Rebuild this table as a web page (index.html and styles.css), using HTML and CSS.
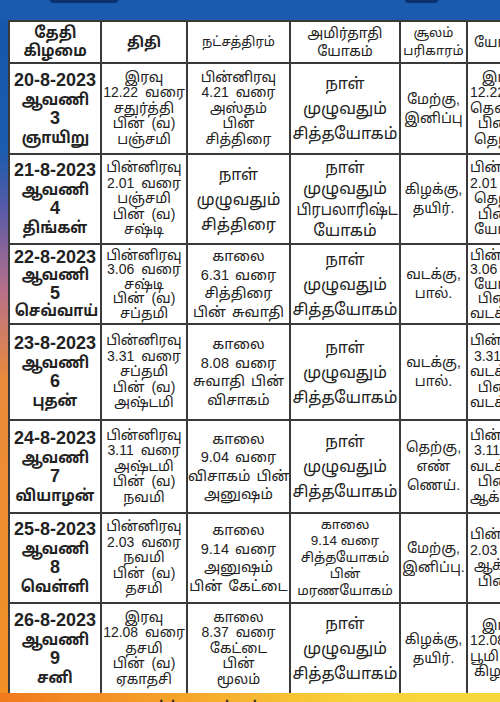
FILE: index.html
```html
<!DOCTYPE html>
<html lang="ta">
<head>
<meta charset="utf-8">
<link rel="stylesheet" href="styles.css">
</head>
<body>
<div class="page">
  <div class="topband">
    <span class="tab tab-a"></span>
    <span class="tab tab-b"></span>
  </div>
  <div class="main">
    <table class="cal">
      <colgroup>
        <col class="w1"><col class="w2"><col class="w3"><col class="w4"><col class="w5"><col class="w6">
      </colgroup>
      <thead>
        <tr class="head">
          <th class="b"><span class="tw">தேதி</span><br><span class="tw">கிழமை</span></th>
          <th class="b">திதி</th>
          <th class="nk">நட்சத்திரம்</th>
          <th>அமிர்தாதி<br>யோகம்</th>
          <th class="sm">சூலம்<br>பரிகாரம்</th>
          <th class="lh">யோகம்</th>
        </tr>
      </thead>
      <tbody>
        <tr class="r1">
          <td class="date">20-8-2023<br><span class="tw">ஆவணி</span><br>3<br><span class="tw">ஞாயிறு</span></td>
          <td class="tx">இரவு<br>12.22 வரை<br>சதுர்த்தி<br>பின் (வ)<br>பஞ்சமி</td>
          <td class="tx">பின்னிரவு<br>4.21 வரை<br>அஸ்தம்<br>பின்<br>சித்திரை</td>
          <td class="big">நாள்<br>முழுவதும்<br>சித்தயோகம்</td>
          <td class="dir">மேற்கு,<br>இனிப்பு</td>
          <td class="tx l">&nbsp;&nbsp;&nbsp;இரவு<br>12.22 வரை<br>தென்மேற்கு<br>&nbsp;&nbsp;பின்<br>&nbsp;தெற்கு</td>
        </tr>
        <tr class="r2">
          <td class="date">21-8-2023<br><span class="tw">ஆவணி</span><br>4<br><span class="tw">திங்கள்</span></td>
          <td class="tx">பின்னிரவு<br>2.01 வரை<br>பஞ்சமி<br>பின் (வ)<br>சஷ்டி</td>
          <td class="big">நாள்<br>முழுவதும்<br>சித்திரை</td>
          <td class="big four">நாள்<br>முழுவதும்<br><span class="sq">பிரபலாரிஷ்ட</span><br>யோகம்</td>
          <td class="dir">கிழக்கு,<br>தயிர்.</td>
          <td class="tx l">பின்னிரவு<br>2.01 வரை<br>&nbsp;தெற்கு<br>&nbsp;&nbsp;பின்<br>&nbsp;யோகம்</td>
        </tr>
        <tr class="r3">
          <td class="date">22-8-2023<br><span class="tw">ஆவணி</span><br>5<br><span class="tw">செவ்வாய்</span></td>
          <td class="tx">பின்னிரவு<br>3.06 வரை<br>சஷ்டி<br>பின் (வ)<br>சப்தமி</td>
          <td class="mid">காலை<br>6.31 வரை<br>சித்திரை<br>பின் சுவாதி</td>
          <td class="big">நாள்<br>முழுவதும்<br>சித்தயோகம்</td>
          <td class="dir">வடக்கு,<br>பால்.</td>
          <td class="tx l">பின்னிரவு<br>3.06 வரை<br>&nbsp;யோகம்<br>&nbsp;&nbsp;பின்<br>வடக்கு</td>
        </tr>
        <tr class="r4">
          <td class="date">23-8-2023<br><span class="tw">ஆவணி</span><br>6<br><span class="tw">புதன்</span></td>
          <td class="tx">பின்னிரவு<br>3.31 வரை<br>சப்தமி<br>பின் (வ)<br>அஷ்டமி</td>
          <td class="mid">காலை<br>8.08 வரை<br>சுவாதி பின்<br>விசாகம்</td>
          <td class="big">நாள்<br>முழுவதும்<br>சித்தயோகம்</td>
          <td class="dir">வடக்கு,<br>பால்.</td>
          <td class="tx l">பின்னிரவு<br>&nbsp;3.31 வரை<br>வடக்கு<br>&nbsp;&nbsp;பின்<br>வடக்கு</td>
        </tr>
        <tr class="r5">
          <td class="date">24-8-2023<br><span class="tw">ஆவணி</span><br>7<br><span class="tw">வியாழன்</span></td>
          <td class="tx">பின்னிரவு<br>3.11 வரை<br>அஷ்டமி<br>பின் (வ)<br>நவமி</td>
          <td class="mid">காலை<br>9.04 வரை<br>விசாகம் பின்<br>அனுஷம்</td>
          <td class="big">நாள்<br>முழுவதும்<br>சித்தயோகம்</td>
          <td class="dir">தெற்கு,<br>எண்<br>ணெய்.</td>
          <td class="tx l">பின்னிரவு<br>&nbsp;3.11 வரை<br>வடக்கு<br>&nbsp;&nbsp;பின்<br>ஆக்னேயம்</td>
        </tr>
        <tr class="r6">
          <td class="date">25-8-2023<br><span class="tw">ஆவணி</span><br>8<br><span class="tw">வெள்ளி</span></td>
          <td class="tx">பின்னிரவு<br>2.03 வரை<br>நவமி<br>பின் (வ)<br>தசமி</td>
          <td class="mid">காலை<br>9.14 வரை<br>அனுஷம்<br>பின் கேட்டை</td>
          <td class="tx t4">காலை<br>9.14 வரை<br>சித்தயோகம்<br>பின்<br>மரணயோகம்</td>
          <td class="dir">மேற்கு,<br>இனிப்பு.</td>
          <td class="tx l">பின்னிரவு<br>2.03 வரை<br>&nbsp;ஆக்னேயம்<br>&nbsp;&nbsp;பின்</td>
        </tr>
        <tr class="r7">
          <td class="date">26-8-2023<br><span class="tw">ஆவணி</span><br>9<br><span class="tw">சனி</span></td>
          <td class="tx">இரவு<br>12.08 வரை<br>தசமி<br>பின் (வ)<br>ஏகாதசி</td>
          <td class="tx">காலை<br>8.37 வரை<br>கேட்டை<br>பின்<br>மூலம்</td>
          <td class="big">நாள்<br>முழுவதும்<br>சித்தயோகம்</td>
          <td class="dir">கிழக்கு,<br>தயிர்.</td>
          <td class="tx l">&nbsp;&nbsp;&nbsp;இரவு<br>12.08 வரை<br>பூமி<br>&nbsp;கிழக்கு</td>
        </tr>
      </tbody>
    </table>
  </div>
  <div class="bottom">
    <span class="foot">சுப முகூர்த்த நாட்கள்</span>
  </div>
</div>
</body>
</html>
```
FILE: styles.css
```css
html, body {
  margin: 0;
  padding: 0;
  width: 500px;
  height: 702px;
  overflow: hidden;
}
body {
  font-family: "Liberation Sans", "Noto Sans Tamil", "Lohit Tamil", "Noto Sans", sans-serif;
  color: #222;
}
.page {
  width: 500px;
  height: 702px;
  overflow: hidden;
  display: flex;
  flex-direction: column;
  background: linear-gradient(to bottom, #1656a8 0px, #1a5cae 150px, #5a5aa8 210px, #b8708a 290px, #ea8a3a 380px, #f39024 700px);
}
.topband {
  height: 20px;
  flex: none;
  background: #1a5bb0;
  position: relative;
}
.tab {
  position: absolute;
  top: 0;
  height: 3px;
  background: #0c2f6e;
  border-radius: 0 0 3px 3px;
}
.tab-a { left: 50px; width: 68px; }
.tab-b { left: 405px; width: 33px; }
.main {
  flex: none;
  padding-left: 8px;
  height: 673px;
  overflow: hidden;
}
.cal {
  border-collapse: collapse;
  table-layout: fixed;
  width: 560px;
  background: #fff;
}
.w1 { width: 92px; }
.w2 { width: 86px; }
.w3 { width: 103px; }
.w4 { width: 110px; }
.w5 { width: 67px; }
.w6 { width: 102px; }
.cal th, .cal td {
  border: 2px solid #3a3a3a;
  text-align: center;
  vertical-align: middle;
  padding: 0;
  overflow: hidden;
  white-space: nowrap;
}
.cal th {
  font-weight: normal;
  font-size: 14px;
  line-height: 18px;
}
.cal th.b { font-weight: bold; font-size: 14px; }
.cal th.nk { font-size: 13px; }
.cal th.sm { font-size: 13px; }
.cal th.lh { text-align: left; padding-left: 6px; }
.head { height: 42px; }
.r1 { height: 91px; }
.r2 { height: 90px; }
.r3 { height: 80px; }
.r4 { height: 96px; }
.r5 { height: 93px; }
.r6 { height: 90px; }
.r7 { height: 91px; }
.r3 .tx { line-height: 14.5px; }
.r3 .date { line-height: 18px; }
.date {
  font-weight: bold;
  font-size: 18px;
  line-height: 19px;
}
.tw {
  display: inline-block;
  vertical-align: top;
  font-size: 16px;
  transform: scaleX(0.9);
}
.tx {
  font-size: 14px;
  line-height: 15.5px;
  word-spacing: 3px;
}
.tx.l { text-align: left; padding-left: 2px; word-spacing: 0; }
.tx.t4 { font-size: 13.5px; line-height: 16.5px; word-spacing: 0; }
.mid {
  font-size: 14.5px;
  line-height: 18.5px;
  word-spacing: 2px;
}
.big {
  font-size: 16px;
  line-height: 25px;
}
.big.four { line-height: 21px; }
.sq {
  display: inline-block;
  vertical-align: top;
  transform: scaleX(0.9);
}
.dir {
  font-size: 14px;
  line-height: 19px;
}
.bottom {
  flex: none;
  height: 9px;
  background: linear-gradient(to right, #f07a1c 0%, #f6a22a 35%, #f8d23a 70%, #f6d83c 100%);
  overflow: hidden;
}
.foot {
  display: block;
  padding-left: 84px;
  padding-top: 4px;
  font-weight: bold;
  font-size: 15px;
  line-height: 20px;
  color: #2a2a2a;
}
```
